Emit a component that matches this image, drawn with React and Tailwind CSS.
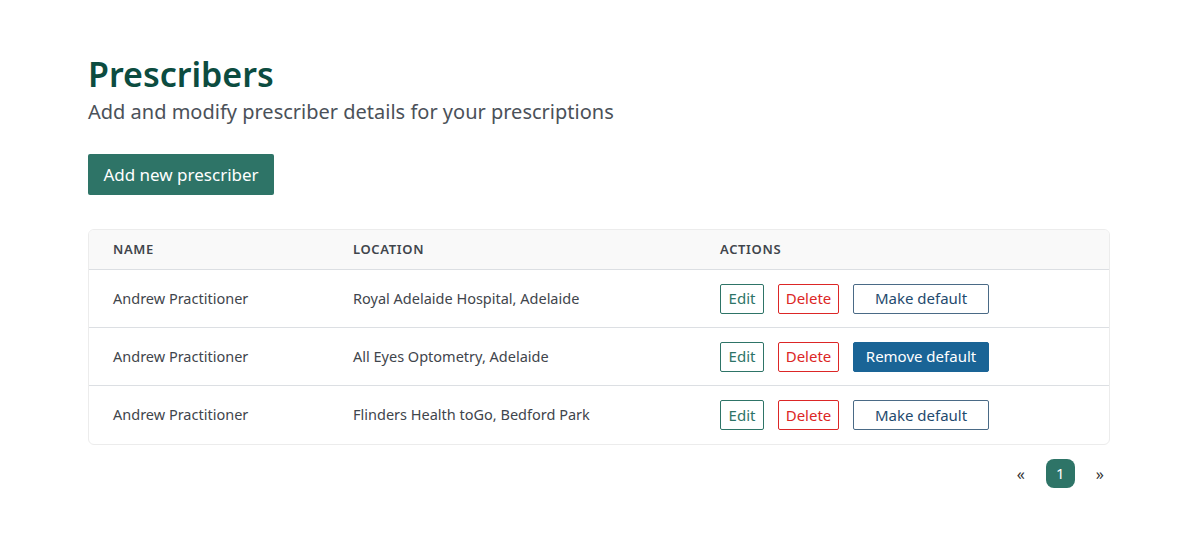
import React from 'react';

const rows = [
  { name: 'Andrew Practitioner', location: 'Royal Adelaide Hospital, Adelaide', isDefault: false },
  { name: 'Andrew Practitioner', location: 'All Eyes Optometry, Adelaide', isDefault: true },
  { name: 'Andrew Practitioner', location: 'Flinders Health toGo, Bedford Park', isDefault: false },
];

const App = () => {
  return (
    <div className="min-h-[543px] bg-white pl-[88px] pr-[90px] pt-[52px] text-[#3a3f45]" style={{ fontFamily: '"Noto Sans", "Open Sans", sans-serif' }}>
      <h1 className="text-[34px] font-semibold leading-[44px] text-[#0c4c40]">Prescribers</h1>
      <p className="mt-[1px] text-[20px] leading-[30px] text-[#4b5159]">Add and modify prescriber details for your prescriptions</p>

      <button className="mt-[27px] h-[41px] w-[186px] rounded-[2px] bg-[#2e7467] text-[17px] text-white">
        Add new prescriber
      </button>

      <div className="mt-[34px] overflow-hidden rounded-md border border-[#ececec]">
        <div className="flex h-[40px] items-center border-b border-[#dcdfe3] bg-[#f9f9f9] text-[13px] font-semibold uppercase tracking-[0.05em] text-[#3f454c]">
          <div className="w-[264px] pl-[24px]">Name</div>
          <div className="w-[367px]">Location</div>
          <div className="flex-1">Actions</div>
        </div>
        {rows.map((row, i) => (
          <div
            key={i}
            className={`flex h-[58px] items-center text-[14.5px] text-[#3f454c] ${i < rows.length - 1 ? 'border-b border-[#dcdfe3]' : ''}`}
          >
            <div className="w-[264px] pl-[24px]">{row.name}</div>
            <div className="w-[367px]">{row.location}</div>
            <div className="flex flex-1 items-center gap-[14px]">
              <button className="h-[30px] w-[44px] rounded-[2px] border border-[#2e7467] text-[15px] text-[#2e7467]">Edit</button>
              <button className="h-[30px] w-[61px] rounded-[2px] border border-[#dc2626] text-[15px] text-[#dc2626]">Delete</button>
              {row.isDefault ? (
                <button className="h-[30px] w-[136px] rounded-[2px] border border-[#1a6496] bg-[#1a6496] text-[15px] text-white">Remove default</button>
              ) : (
                <button className="h-[30px] w-[136px] rounded-[2px] border border-[#4a6a86] text-[15px] text-[#1f4a6e]">Make default</button>
              )}
            </div>
          </div>
        ))}
      </div>

      <div className="mt-[14px] flex items-center justify-end gap-[21px] pr-[6px] text-[16px] text-[#333]">
        <span>«</span>
        <span className="flex h-[29px] w-[29px] items-center justify-center rounded-lg bg-[#2e7467] text-[15px] text-white">1</span>
        <span>»</span>
      </div>
    </div>
  );
};

export default App;
